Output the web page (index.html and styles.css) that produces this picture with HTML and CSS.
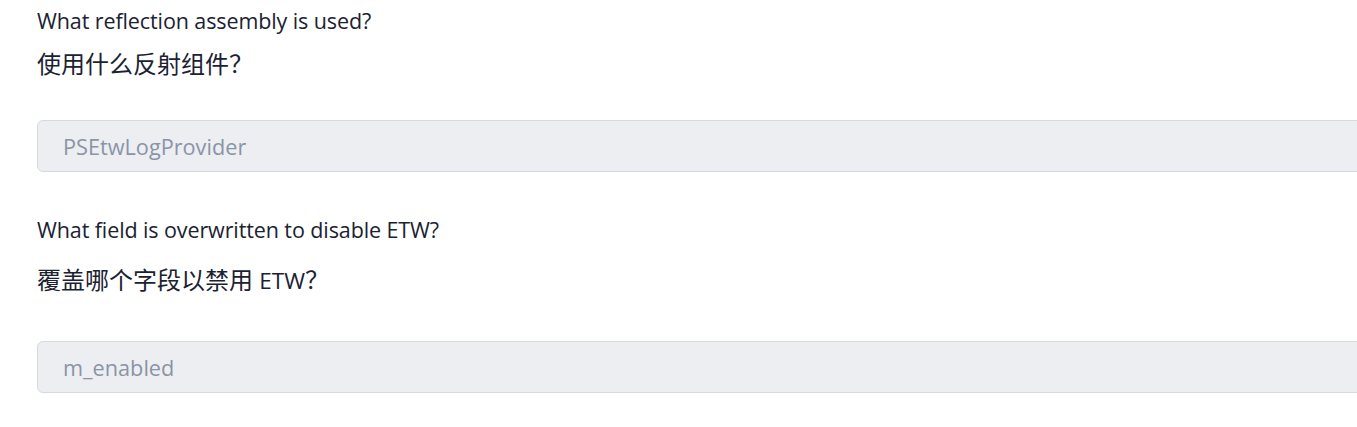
FILE: index.html
```html
<!DOCTYPE html>
<html lang="en">
<head>
<meta charset="utf-8">
<title>Questions</title>
<link rel="stylesheet" href="styles.css">
</head>
<body>
<main class="page">
  <section class="question q1">
    <p class="q-en">What reflection assembly is used?</p>
    <p class="q-zh">使用什么反射组件？</p>
    <div class="answer">PSEtwLogProvider</div>
  </section>
  <section class="question q2">
    <p class="q-en">What field is overwritten to disable ETW?</p>
    <p class="q-zh">覆盖哪个字段以禁用 <span class="latin">ETW</span>？</p>
    <div class="answer">m_enabled</div>
  </section>
</main>
</body>
</html>
```
FILE: styles.css
```css
html, body {
  margin: 0;
  padding: 0;
  background: #ffffff;
  overflow: hidden;
}
body {
  font-family: "Open Sans", "Noto Sans CJK SC", sans-serif;
  color: #1a2232;
}
.page {
  padding-left: 37px;
  width: 1360px;
}
.question p {
  margin: 0;
}
.q-en {
  font-size: 21.5px;
  line-height: 28px;
  letter-spacing: -0.1px;
}
.q-zh {
  font-size: 24px;
  line-height: 32px;
}
.q-zh .latin {
  font-size: 22.5px;
}
.q1 {
  padding-top: 7px;
}
.q1 .q-zh {
  margin-top: 13px;
}
.q1 .answer {
  margin-top: 40px;
}
.q2 {
  padding-top: 44px;
}
.q2 .q-zh {
  margin-top: 20px;
}
.q2 .answer {
  margin-top: 44px;
}
.answer {
  box-sizing: border-box;
  height: 52px;
  width: 1340px;
  background: #eceef2;
  border: 1px solid #d5d9e0;
  border-radius: 6px;
  padding-left: 25px;
  display: flex;
  align-items: center;
  font-size: 21.7px;
  color: #8a94a6;
}
```
